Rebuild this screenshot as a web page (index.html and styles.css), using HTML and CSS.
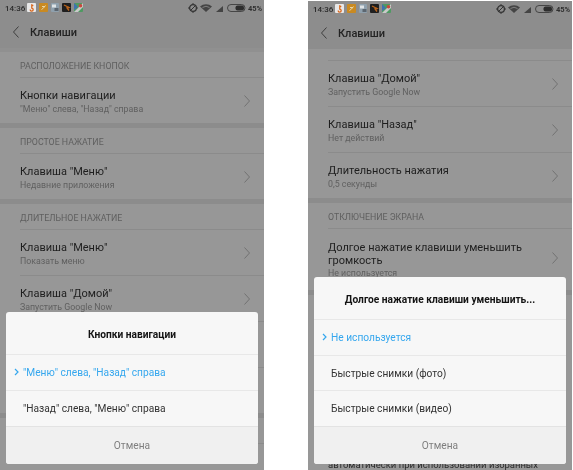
FILE: index.html
```html
<!DOCTYPE html>
<html lang="ru">
<head>
<meta charset="utf-8">
<title>Клавиши</title>
<link rel="stylesheet" href="styles.css">
</head>
<body>
<svg class="defs" width="0" height="0" aria-hidden="true">
  <symbol id="chev" viewBox="0 0 8 14"><path d="M1.500 1.500 6.500 7l-5 5.500" fill="none" stroke="currentColor" stroke-width="1"/></symbol>
  <symbol id="tick" viewBox="0 0 5 8"><path d="M1 1l3 3-3 3" fill="none" stroke="currentColor" stroke-width="1.200"/></symbol>
  <symbol id="status-apps" viewBox="0 0 56 10">
    <rect x="0" y="0" width="9" height="9" rx="1" fill="#e8e8e8"/><path d="M3.200 6.500a1.500 1.500 0 1 0 1.600-1.400V2l1.500.6" fill="none" stroke="#d9651a" stroke-width="1.300"/>
    <rect x="12" y="0" width="9" height="9" rx="1" fill="#c98a22"/><path d="M14.500 6.500q2-1 4-4M15 3.500h3" stroke="#e8d6a8" stroke-width="1" fill="none"/>
    <rect x="24" y="0" width="8" height="9" rx="1" fill="#8fa0ad"/><rect x="25" y="1.500" width="4" height="3" fill="#dfe3e6"/><rect x="27.500" y="5" width="4" height="3" fill="#5c6670"/>
    <rect x="35" y="0" width="9" height="9" rx="1" fill="#1f1f1f"/><path d="M37 2l5 2.500-2 .5 2 2.500" stroke="#b9641d" stroke-width="1.300" fill="none"/>
    <rect x="47" y="0" width="9" height="9" rx="1" fill="#4f9a62"/><path d="M47 9l9-9v4l-5 5z" fill="#c9c9c9"/><circle cx="53.500" cy="2.700" r="1.800" fill="#c9483c"/><path d="M47 0l4 4-4 3z" fill="#3f73b0"/>
  </symbol>
  <symbol id="status-sys" viewBox="0 0 58 10">
    <circle cx="5" cy="5" r="3.400" fill="none" stroke="#333" stroke-width="1.300"/><path d="M2 8l6-6M5 0v1M5 9v1M0 5h1M9 5h1" stroke="#333" stroke-width="1"/>
    <path d="M12 3.500a9 9 0 0 1 12 0L18 9z" fill="#444"/><path d="M14.500 4.500a6 6 0 0 1 7 0" stroke="#999" stroke-width=".7" fill="none"/>
    <path d="M28 9l7-6v6z" fill="#444"/>
    <rect x="39.500" y="1.500" width="17.500" height="7" rx="3.500" fill="none" stroke="#333" stroke-width=".8"/><rect x="47.500" y="2.500" width="8.500" height="5" rx="2" fill="#2d2d2d"/>
  </symbol>
</svg>
<main class="shots">

  <section class="phone">
    <div class="status">
      <span class="time">14:36</span>
      <svg class="apps"><use href="#status-apps"/></svg>
      <svg class="sys"><use href="#status-sys"/></svg>
      <span class="batt">45%</span>
    </div>
    <header class="bar">
      <svg class="back" viewBox="0 0 8 14"><path d="M6.500 1.500 1.500 7l5 5.500" fill="none" stroke="currentColor" stroke-width="1"/></svg>
      <h1>Клавиши</h1>
    </header>
    <div class="list">
      <h2 class="cap">РАСПОЛОЖЕНИЕ КНОПОК</h2>
      <div class="row"><div class="txt"><p class="t">Кнопки навигации</p><p class="s">"Меню" слева, "Назад" справа</p></div><svg class="chev"><use href="#chev"/></svg></div>
      <div class="band"></div>
      <h2 class="cap">ПРОСТОЕ НАЖАТИЕ</h2>
      <div class="row"><div class="txt"><p class="t">Клавиша "Меню"</p><p class="s">Недавние приложения</p></div><svg class="chev"><use href="#chev"/></svg></div>
      <div class="band"></div>
      <h2 class="cap">ДЛИТЕЛЬНОЕ НАЖАТИЕ</h2>
      <div class="row"><div class="txt"><p class="t">Клавиша "Меню"</p><p class="s">Показать меню</p></div><svg class="chev"><use href="#chev"/></svg></div>
      <div class="row"><div class="txt"><p class="t">Клавиша "Домой"</p><p class="s">Запустить Google Now</p></div><svg class="chev"><use href="#chev"/></svg></div>
      <div class="row"><div class="txt"><p class="t">Клавиша "Назад"</p><p class="s">Нет действий</p></div><svg class="chev"><use href="#chev"/></svg></div>
      <div class="row"><div class="txt"><p class="t">Длительность нажатия</p><p class="s">0,5 секунды</p></div><svg class="chev"><use href="#chev"/></svg></div>
      <div class="band"></div>
      <h2 class="cap">ОТКЛЮЧЕНИЕ ЭКРАНА</h2>
      <div class="row row-tall"><div class="txt"><p class="t">Долгое нажатие клавиши уменьшить</p></div></div>
    </div>
    <div class="dialog">
      <h3 class="dtitle">Кнопки навигации</h3>
      <div class="opt on"><svg class="tick"><use href="#tick"/></svg>"Меню" слева, "Назад" справа</div>
      <div class="opt">"Назад" слева, "Меню" справа</div>
      <div class="cancel">Отмена</div>
    </div>
  </section>

  <section class="phone phone-b">
    <div class="status">
      <span class="time">14:36</span>
      <svg class="apps"><use href="#status-apps"/></svg>
      <svg class="sys"><use href="#status-sys"/></svg>
      <span class="batt">45%</span>
    </div>
    <header class="bar">
      <svg class="back" viewBox="0 0 8 14"><path d="M6.500 1.500 1.500 7l5 5.500" fill="none" stroke="currentColor" stroke-width="1"/></svg>
      <h1>Клавиши</h1>
    </header>
    <div class="list list-scrolled">
      <div class="rule"></div>
      <div class="row"><div class="txt"><p class="t">Клавиша "Домой"</p><p class="s">Запустить Google Now</p></div><svg class="chev"><use href="#chev"/></svg></div>
      <div class="row"><div class="txt"><p class="t">Клавиша "Назад"</p><p class="s">Нет действий</p></div><svg class="chev"><use href="#chev"/></svg></div>
      <div class="row"><div class="txt"><p class="t">Длительность нажатия</p><p class="s">0,5 секунды</p></div><svg class="chev"><use href="#chev"/></svg></div>
      <div class="band"></div>
      <h2 class="cap">ОТКЛЮЧЕНИЕ ЭКРАНА</h2>
      <div class="row row-tall"><div class="txt"><p class="t">Долгое нажатие клавиши уменьшить громкость</p><p class="s">Не используется</p></div><svg class="chev"><use href="#chev"/></svg></div>
      <div class="band"></div>
    </div>
    <p class="peek">автоматически при использовании избранных</p>
    <div class="dialog">
      <h3 class="dtitle">Долгое нажатие клавиши уменьшить...</h3>
      <div class="opt on"><svg class="tick"><use href="#tick"/></svg>Не используется</div>
      <div class="opt opt-short">Быстрые снимки (фото)</div>
      <div class="opt">Быстрые снимки (видео)</div>
      <div class="cancel">Отмена</div>
    </div>
  </section>

</main>
</body>
</html>
```
FILE: styles.css
```css
* { box-sizing: border-box; }
html, body { margin: 0; height: 100%; background: #fff; }
body { font-family: Roboto, "Noto Sans", sans-serif; overflow: hidden; }
.defs { position: absolute; }
.shots { display: flex; gap: 44px; height: 470px; }
.phone { position: relative; width: 264px; height: 470px; overflow: hidden; background: #979797; color: #1b1b1b; filter: blur(0.3px); }
.phone-b { height: 469px; margin-top: 1px; }
.status { display: flex; align-items: center; height: 16px; padding: 0 0 0 5px; background: #8d8d8d; }
.time { font-size: 8px; font-weight: 500; color: #2a2a2a; width: 22px; }
.apps { width: 56px; height: 10px; margin-top: -1px; }
.sys { width: 58px; height: 10px; margin-left: 105px; }
.batt { font-size: 7.500px; font-weight: 700; color: #2f2f2f; margin-left: 2px; }
.bar { display: flex; align-items: center; height: 32px; padding-left: 12px; background: #8d8d8d; }
.back { width: 8px; height: 14px; color: #3e3e3e; }
h1 { margin: 0 0 0 10px; font-size: 11px; font-weight: 500; color: #232323; }
.list { border-top: 4px solid #909090; padding-left: 20px; }
.list-scrolled { border-top: 0; padding-top: 11px; }
.rule { height: 1px; background: #8b8b8b; }
.cap { margin: 0; height: 26px; padding-top: 8px; font-size: 8.800px; font-weight: 400; color: #5f5f5f; border-bottom: 1px solid #8b8b8b; line-height: 12px; }
.row { display: flex; align-items: center; height: 46px; padding: 4px 13px 0 0; border-bottom: 1px solid #8b8b8b; }
.row-tall { height: 62px; padding-top: 0; border-bottom: 0; }
.row-tall .t { line-height: 13px; }
.txt { flex: 1; min-width: 0; }
.t { margin: 0; font-size: 11px; line-height: 14px; color: #1e1e1e; }
.s { margin: 0; font-size: 8.800px; line-height: 13px; color: #606060; }
.chev { flex: none; width: 8px; height: 14px; color: #727272; margin-top: -4px; }
.band { height: 5px; margin: -1px 0 0 -20px; background: #8c8c8c; position: relative; }
.dialog { position: absolute; left: 6px; right: 6px; bottom: 6px; border-radius: 3px; background: #f7f7f7; overflow: hidden; }
.dtitle { margin: 0; height: 42px; padding-top: 2px; display: flex; align-items: center; justify-content: center; font-size: 10.200px; font-weight: 700; color: #141414; }
.opt { position: relative; height: 36px; display: flex; align-items: center; padding-left: 17px; font-size: 10.200px; color: #333; border-top: 1px solid #e8e8e8; }
.opt-short { height: 35px; }
.opt.on { color: #35a7ee; }
.tick { position: absolute; left: 8px; top: 13px; width: 5px; height: 8px; color: #35a7ee; }
.cancel { height: 38px; display: flex; align-items: center; justify-content: center; font-size: 10.200px; color: #7f7f7f; background: #f0f0f0; border-top: 1px solid #e3e3e3; }
.peek { position: absolute; left: 20px; bottom: 0; margin: 0; font-size: 9.500px; line-height: 10px; color: #2a2a2a; }
```
